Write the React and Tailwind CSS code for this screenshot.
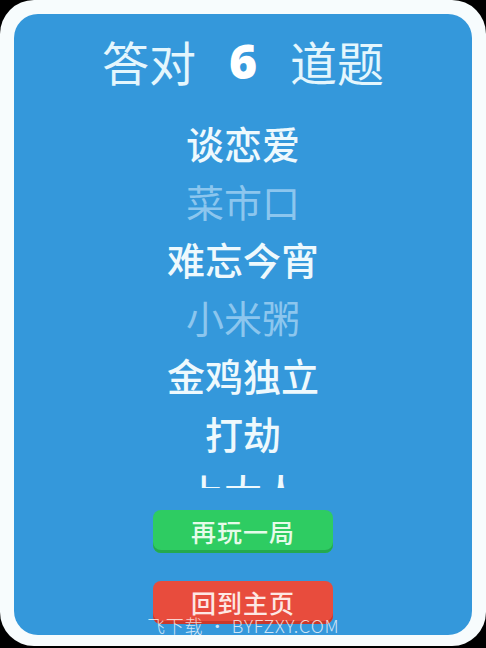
import React from "react";

const items = [
  { t: "谈恋爱", on: true },
  { t: "菜市口", on: false },
  { t: "难忘今宵", on: true },
  { t: "小米粥", on: false },
  { t: "金鸡独立", on: true },
  { t: "打劫", on: true },
  { t: "上大人", on: true },
];

export default function App() {
  const cjk = { fontFamily: '"Noto Sans CJK SC", "Noto Sans", sans-serif' };
  return (
    <div className="w-[486px] h-[648px] bg-black overflow-hidden" style={cjk}>
      <div className="w-[486px] h-[646px] bg-[#f7fcfd] rounded-[34px] p-[14px]">
        <div className="relative w-[458px] h-[621px] bg-[#3498db] rounded-[24px] flex flex-col items-center">
          <div className="h-[100px] w-full flex items-center justify-center gap-[33px] text-[47px] font-normal text-[#e4f6fd] leading-none pb-[7px]">
            <span>答对</span>
            <span className="text-[48px] font-black text-white" style={{ fontFamily: '"Noto Sans", sans-serif' }}>6</span>
            <span>道题</span>
          </div>
          <div className="h-[374px] w-full overflow-hidden flex flex-col items-center">
            {items.map((it) => (
              <div
                key={it.t}
                className={`h-[58px] shrink-0 flex items-center justify-center text-[38px] leading-none ${
                  it.on ? "text-[#eef9fd] font-medium" : "text-[#8cc6ee] font-normal"
                }`}
              >
                {it.t}
              </div>
            ))}
          </div>
          <button className="mt-[22px] w-[180px] h-[43px] rounded-[8px] bg-[#2ecc62] shadow-[inset_0_-3px_0_#24a94f] flex items-center justify-center text-[25px] font-medium text-[#e6fbe9] tracking-[1px] leading-none">
            再玩一局
          </button>
          <button className="mt-[28px] w-[180px] h-[43px] rounded-[8px] bg-[#e84c3d] shadow-[inset_0_-3px_0_#c9392c] flex items-center justify-center text-[25px] font-medium text-[#fde8e4] tracking-[1px] leading-none">
            回到主页
          </button>
          <div className="absolute left-[133px] top-[602px] text-[18px] leading-none text-white/75 whitespace-nowrap tracking-[0.8px]" style={{ fontFamily: '"Noto Sans CJK SC", "Liberation Sans", sans-serif', fontWeight: 300 }}>
            飞下载 • BYFZXY.COM
          </div>
        </div>
      </div>
    </div>
  );
}
